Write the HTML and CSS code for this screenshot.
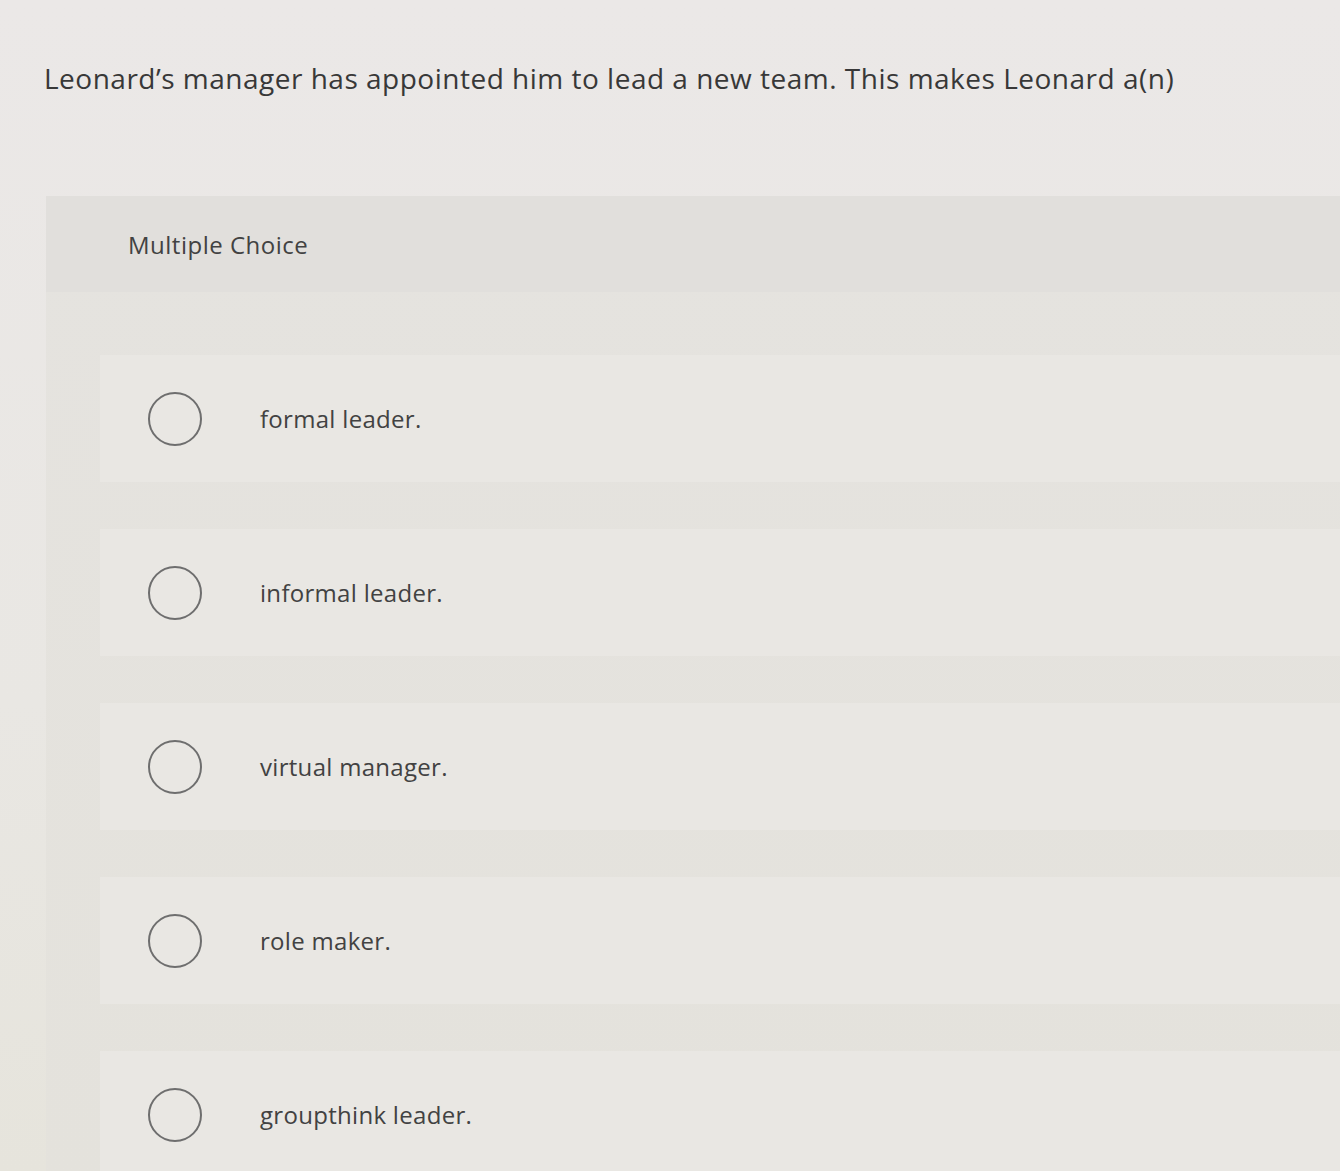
FILE: index.html
```html
<!DOCTYPE html>
<html lang="en">
<head>
<meta charset="utf-8">
<title>Multiple Choice</title>
<link rel="stylesheet" href="styles.css">
</head>
<body>
<main class="page">
  <p class="question">Leonard’s manager has appointed him to lead a new team. This makes Leonard a(n)</p>
  <section class="panel">
    <header class="panel-head">Multiple Choice</header>
    <ul class="options">
      <li class="option"><span class="radio"></span><span class="label">formal leader.</span></li>
      <li class="option"><span class="radio"></span><span class="label">informal leader.</span></li>
      <li class="option"><span class="radio"></span><span class="label">virtual manager.</span></li>
      <li class="option"><span class="radio"></span><span class="label">role maker.</span></li>
      <li class="option"><span class="radio"></span><span class="label">groupthink leader.</span></li>
    </ul>
  </section>
</main>
</body>
</html>
```
FILE: styles.css
```css
* { box-sizing: border-box; }
html, body { margin: 0; padding: 0; }
body {
  background: linear-gradient(180deg, #ebe8e7 0%, #e9e7e3 60%, #e6e4dc 100%);
  font-family: "Open Sans", "Liberation Sans", sans-serif;
  color: #3a3a3a;
  overflow: hidden;
  height: 1171px;
}
.page {
  padding: 54px 0 0 44px;
}
.question {
  margin: 0;
  font-size: 28px;
  line-height: 48px;
  color: #383838;
  letter-spacing: 0.5px;
  white-space: nowrap;
}
.panel {
  margin-top: 94px;
  margin-left: 2px;
  background: linear-gradient(180deg, #e5e3df 0%, #e4e2dc 100%);
  min-height: 1000px;
}
.panel-head {
  background: #e1dfdc;
  height: 96px;
  display: flex;
  align-items: center;
  padding-left: 82px;
  font-size: 24px;
  letter-spacing: 0.5px;
  color: #424242;
}
.options {
  list-style: none;
  margin: 0;
  padding: 63px 0 0 54px;
  display: flex;
  flex-direction: column;
  gap: 47px;
}
.option {
  background: #e9e7e3;
  height: 127px;
  display: flex;
  align-items: center;
  padding-left: 48px;
}
.radio {
  width: 54px;
  height: 54px;
  border: 2px solid #6e6e6e;
  border-radius: 50%;
  flex: none;
}
.label {
  margin-left: 58px;
  font-size: 24px;
  letter-spacing: 0.3px;
  color: #424242;
}
```
